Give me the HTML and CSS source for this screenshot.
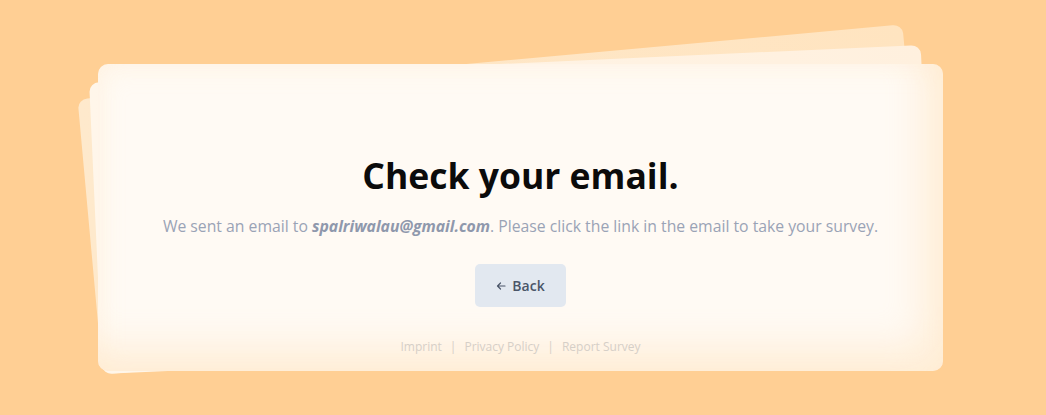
FILE: index.html
```html
<!DOCTYPE html>
<html lang="en">
<head>
<meta charset="utf-8">
<title>Check your email</title>
<link rel="stylesheet" href="styles.css">
</head>
<body>
<div class="page">
  <div class="stack">
    <div class="sheet sheet-back"></div>
    <div class="sheet sheet-mid"></div>
    <main class="card">
      <h1 class="title">Check your email.</h1>
      <p class="message">We sent an email to <strong class="email">spalriwalau@gmail.com</strong>. Please click the link in the email to take your survey.</p>
      <button class="back-btn" type="button">
        <svg class="back-icon" width="10" height="10" viewBox="0 0 10 10" aria-hidden="true"><path d="M9 5H1.5M4.5 2L1.5 5L4.5 8" fill="none" stroke="currentColor" stroke-width="1.2" stroke-linecap="round" stroke-linejoin="round"/></svg>
        <span>Back</span>
      </button>
      <nav class="footer">
        <a class="footer-link" href="#">Imprint</a>
        <span class="sep">|</span>
        <a class="footer-link" href="#">Privacy Policy</a>
        <span class="sep">|</span>
        <a class="footer-link" href="#">Report Survey</a>
      </nav>
    </main>
  </div>
</div>
</body>
</html>
```

FILE: styles.css
```css
* { box-sizing: border-box; }
html, body { margin: 0; height: 100%; }
body {
  background: #ffcf94;
  font-family: "Open Sans", "Noto Sans", sans-serif;
  overflow: hidden;
}
.page {
  padding: 64px 0 0 98px;
}
.stack {
  position: relative;
  width: 845px;
  height: 307px;
}
.sheet {
  position: absolute;
  inset: 0;
  border-radius: 10px;
}
.sheet-back {
  background: linear-gradient(90deg, #fee9cc 0%, #ffe4c0 100%);
  transform: translate(-18px, -18px) rotate(-5.2deg) scale(0.98, 0.9);
}
.sheet-mid {
  background: linear-gradient(90deg, #fff6ea 0%, #fff0de 100%);
  transform: translate(-9px, -8px) rotate(-2.6deg) scale(0.985, 0.95);
}
.card {
  position: relative;
  height: 307px;
  border-radius: 10px;
  background: #fffaf4;
  box-shadow: inset -20px -24px 36px rgba(255, 214, 160, 0.32), inset 4px 6px 24px rgba(255, 225, 185, 0.18);
  display: flex;
  flex-direction: column;
  align-items: center;
  padding-top: 90px;
}
.title {
  margin: 0;
  font-size: 35.5px;
  line-height: 43px;
  font-weight: 700;
  color: #0b0b0b;
}
.message {
  margin: 17px 0 0;
  font-size: 15.75px;
  line-height: 24px;
  color: #9aa3b6;
}
.email {
  font-style: italic;
  font-weight: 700;
  color: #8f98ac;
}
.back-btn {
  margin-top: 26px;
  width: 91px;
  height: 43px;
  border: 0;
  border-radius: 5px;
  background: #e2e8f0;
  color: #4a5568;
  font-family: inherit;
  font-size: 14px;
  font-weight: 600;
  display: flex;
  align-items: center;
  justify-content: center;
  gap: 6px;
  padding: 0;
}
.back-icon { display: block; }
.footer {
  margin-top: 30px;
  display: flex;
  gap: 8px;
  font-size: 12px;
  line-height: 20px;
}
.footer-link {
  color: #d6cfc7;
  text-decoration: none;
}
.sep { color: #d6cfc7; }
```
